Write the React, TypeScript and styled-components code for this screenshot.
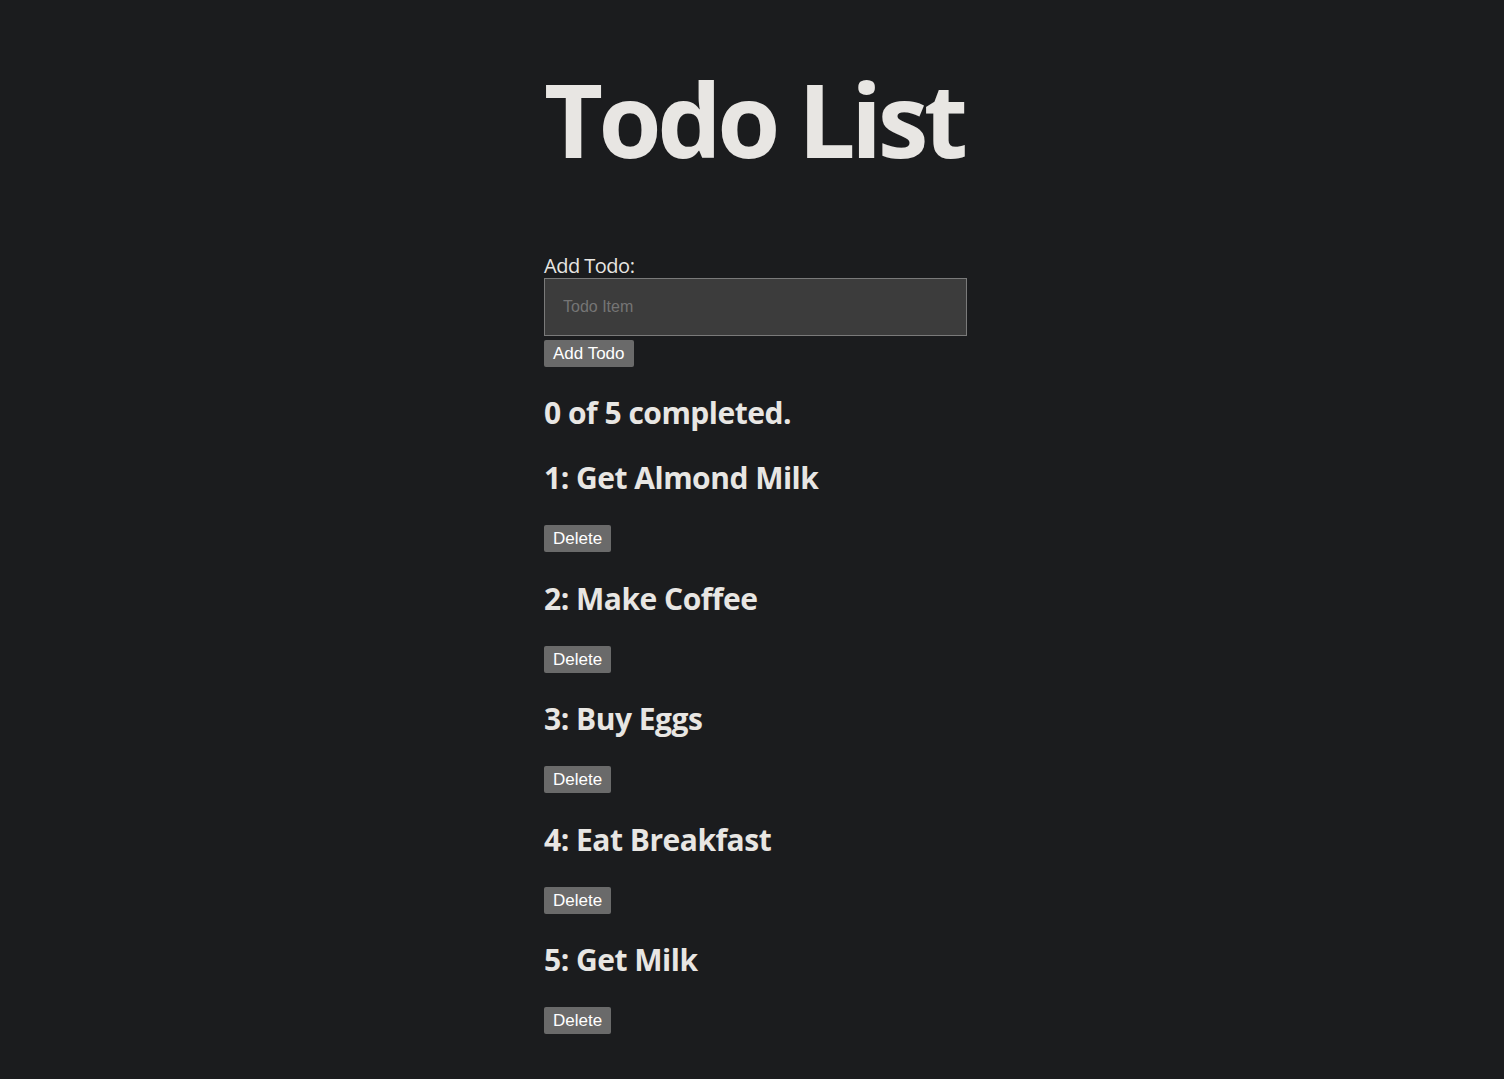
import React from 'react';
import styled, { createGlobalStyle } from 'styled-components';

const todos = ['Get Almond Milk', 'Make Coffee', 'Buy Eggs', 'Eat Breakfast', 'Get Milk'];

const GlobalStyle = createGlobalStyle`
  html, body {
    margin: 0;
    background: #1b1c1e;
    color: #e8e6e3;
    font-family: "Open Sans", "Noto Sans", sans-serif;
  }
`;

const Page = styled.main`
  width: 423px;
  margin-left: calc(50% - 208px);
  padding-bottom: 40px;
`;

const Title = styled.h1`
  margin: 68px 0 0;
  font-size: 102px;
  line-height: 1;
  font-weight: 700;
  letter-spacing: -4.5px;
  white-space: nowrap;
`;

const Form = styled.form`
  display: flex;
  flex-direction: column;
  align-items: flex-start;
  margin-top: 86px;
`;

const Label = styled.label`
  font-size: 20px;
  line-height: 1;
  letter-spacing: -0.5px;
`;

const Input = styled.input`
  box-sizing: border-box;
  width: 100%;
  height: 58px;
  margin-top: 2px;
  padding: 0 18px;
  background: #3c3c3c;
  border: 1px solid #7a7a7a;
  color: #e8e6e3;
  font-family: "Liberation Sans", Arial, sans-serif;
  font-size: 16px;
  outline: none;

  &::placeholder {
    color: #757575;
  }
`;

const Button = styled.button`
  height: 27px;
  padding: 0 9px;
  margin-top: ${(p: { $top?: number }) => p.$top ?? 0}px;
  background: #6a6a6a;
  color: #fff;
  border: none;
  border-radius: 2px;
  font-family: "Liberation Sans", Arial, sans-serif;
  font-size: 17px;
  line-height: 27px;
  cursor: pointer;
`;

const Heading = styled.h2`
  margin: ${(p: { $top: number }) => p.$top}px 0 0;
  font-size: 30px;
  line-height: 1;
  font-weight: 700;
  letter-spacing: -0.5px;
`;

const Item = styled.section`
  display: flex;
  flex-direction: column;
  align-items: flex-start;
`;

export default function App() {
  return (
    <>
      <GlobalStyle />
      <Page>
        <Title>Todo List</Title>
        <Form onSubmit={(e) => e.preventDefault()}>
          <Label htmlFor="todo">Add Todo:</Label>
          <Input id="todo" placeholder="Todo Item" />
          <Button type="submit" $top={4}>Add Todo</Button>
        </Form>
        <Heading $top={31}>0 of {todos.length} completed.</Heading>
        {todos.map((t, i) => (
          <Item key={t}>
            <Heading $top={i === 0 ? 35 : 31.5}>
              {i + 1}: {t}
            </Heading>
            <Button $top={32}>Delete</Button>
          </Item>
        ))}
      </Page>
    </>
  );
}
